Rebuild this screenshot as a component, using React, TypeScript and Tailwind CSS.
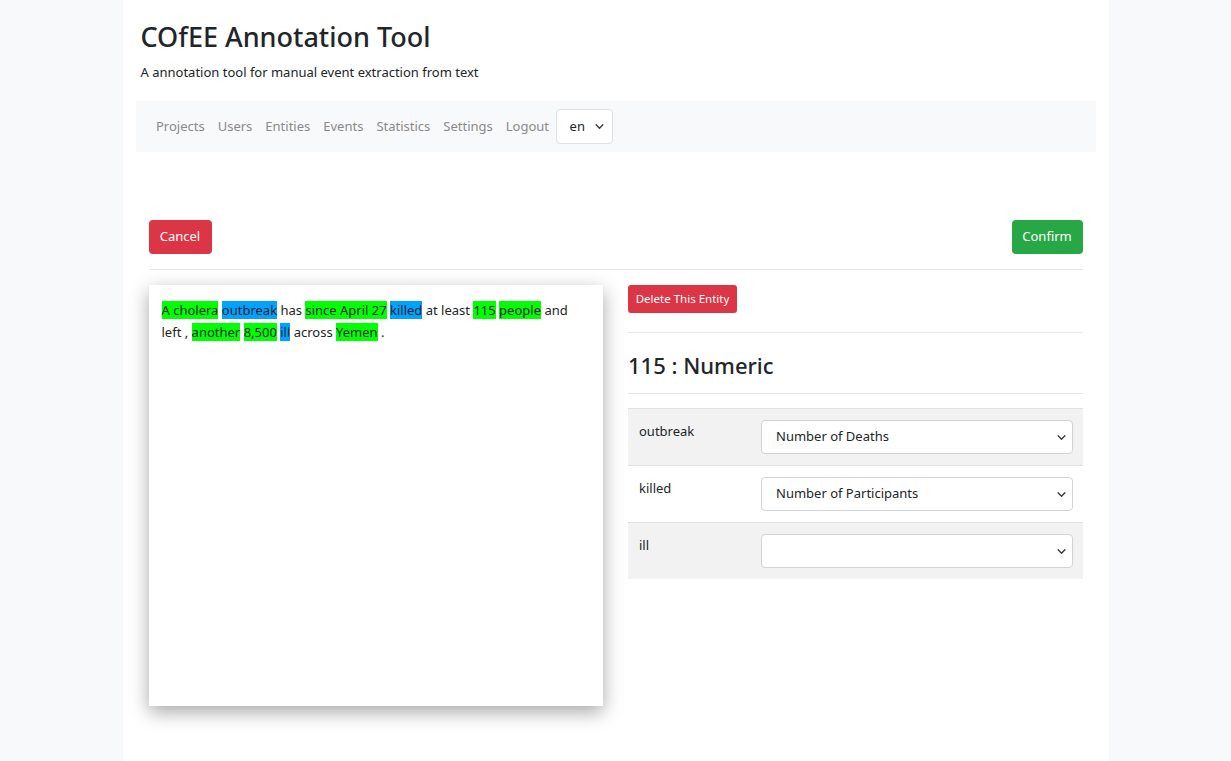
import React from 'react';

const FONT = { fontFamily: '"Noto Sans", "Open Sans", Arial, sans-serif' };

type Token = { text: string; kind?: 'g' | 'b' };

const tokens: Token[] = [
  { text: 'A cholera', kind: 'g' },
  { text: 'outbreak', kind: 'b' },
  { text: 'has' },
  { text: 'since April 27', kind: 'g' },
  { text: 'killed', kind: 'b' },
  { text: 'at least' },
  { text: '115', kind: 'g' },
  { text: 'people', kind: 'g' },
  { text: 'and' },
  { text: 'left ,' },
  { text: 'another', kind: 'g' },
  { text: '8,500', kind: 'g' },
  { text: 'ill', kind: 'b' },
  { text: 'across' },
  { text: 'Yemen', kind: 'g' },
  { text: '.' },
];

const Chevron = () => (
  <svg width="9" height="7" viewBox="0 0 16 12" className="shrink-0">
    <path d="m2 3 6 6 6-6" fill="none" stroke="#343a40" strokeWidth="2.4" strokeLinecap="round" strokeLinejoin="round" />
  </svg>
);

const FakeSelect: React.FC<{ value: string }> = ({ value }) => (
  <div className="h-[34px] w-full flex items-center justify-between bg-white border border-[#ced4da] rounded-[4px] pl-[14px] pr-[6px] text-[13px] text-[#212529]">
    <span>{value}</span>
    <Chevron />
  </div>
);

const rows = [
  { label: 'outbreak', value: 'Number of Deaths', striped: true },
  { label: 'killed', value: 'Number of Participants', striped: false },
  { label: 'ill', value: '', striped: true },
];

export default function App() {
  return (
    <div className="min-h-screen bg-[#f8f9fa]" style={FONT}>
      <div className="mx-auto w-[986px] min-h-[761px] bg-white px-[13px] pt-[17px]">
        <div className="pl-[5px]">
          <h1 className="text-[27px] leading-[40px] font-medium text-[#212529]">COfEE Annotation Tool</h1>
          <p className="text-[13px] leading-[22px] mt-[4px] text-[#212529]">A annotation tool for manual event extraction from text</p>
        </div>

        <nav className="mt-[18px] h-[51px] bg-[#f8f9fa] flex items-center pl-[14px] text-[13px] text-[#8a8a8a]">
          {['Projects', 'Users', 'Entities', 'Events', 'Statistics', 'Settings', 'Logout'].map((l) => (
            <a key={l} className="px-[6.5px]">{l}</a>
          ))}
          <div className="h-[35px] w-[57px] bg-white border border-[#dee2e6] rounded-[4px] flex items-center justify-between pl-[13px] pr-[8px] text-[13px] text-[#212529]">
            <span>en</span>
            <Chevron />
          </div>
        </nav>

        <div className="px-[13px] mt-[68px]">
          <div className="flex justify-between items-center">
            <button className="h-[34px] w-[63px] rounded-[4px] bg-[#dc3545] text-white text-[13px]">Cancel</button>
            <button className="h-[34px] w-[71px] rounded-[4px] bg-[#28a745] text-white text-[13px]">Confirm</button>
          </div>
          <div className="mt-[15px] border-t border-[#e5e7eb]" />

          <div className="mt-[15px] grid grid-cols-2 gap-[25px]">
            <div className="h-[421px] bg-white shadow-[0_6px_18px_rgba(0,0,0,0.35)] px-[13px] pt-[14px] text-[13px] leading-[22px] text-[#212529]">
              {tokens.map((t, i) => (
                <React.Fragment key={i}>
                  <span className={t.kind === 'g' ? 'bg-[#00ff00]' : t.kind === 'b' ? 'bg-[#00a2ff]' : ''}>
                    {t.text}
                  </span>{' '}
                </React.Fragment>
              ))}
            </div>

            <div>
              <button className="h-[28px] w-[109px] rounded-[3px] bg-[#dc3545] text-white text-[11.5px]">Delete This Entity</button>
              <div className="mt-[19px] border-t border-[#e5e7eb]" />
              <h2 className="pt-[18px] pb-[14px] text-[22px] leading-[28px] font-medium text-[#212529]">115 : Numeric</h2>
              <div className="border-t border-[#e5e7eb]" />
              <div className="mt-[14px]">
                {rows.map((r) => (
                  <div
                    key={r.label}
                    className={`h-[57px] flex border-t border-[#dee2e6] ${r.striped ? 'bg-[#f2f2f2]' : 'bg-white'}`}
                  >
                    <div className="w-[133px] pl-[11px] pt-[13px] text-[13px] text-[#212529]">{r.label}</div>
                    <div className="flex-1 pr-[10px] pt-[11px]">
                      <FakeSelect value={r.value} />
                    </div>
                  </div>
                ))}
              </div>
            </div>
          </div>
        </div>
      </div>
    </div>
  );
}
